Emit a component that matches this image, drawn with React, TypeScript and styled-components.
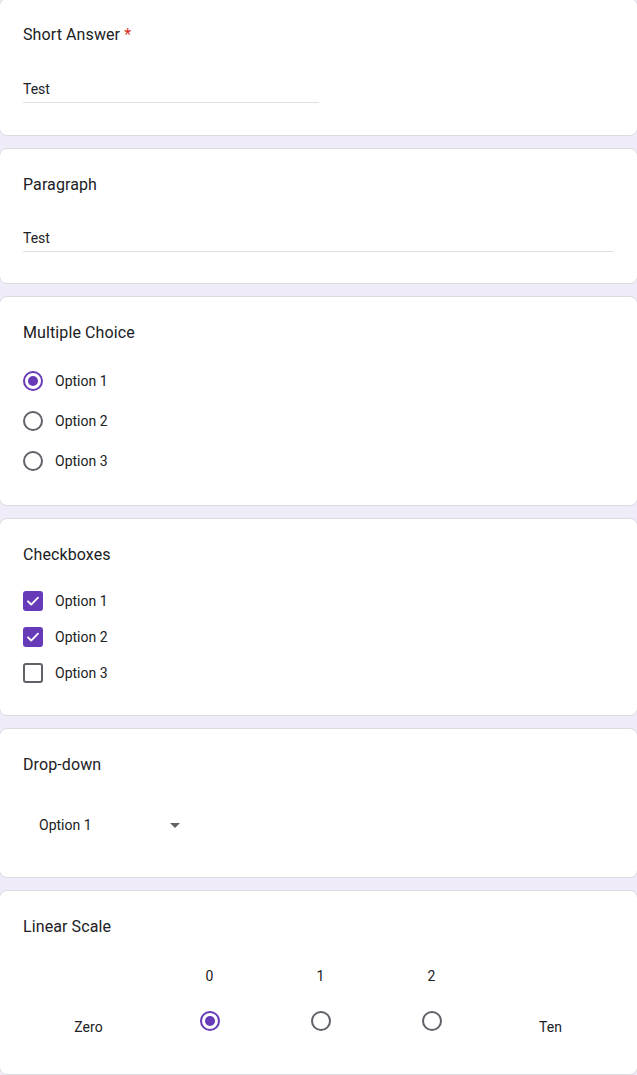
import React from 'react'
import styled, { createGlobalStyle } from 'styled-components'

const GlobalStyle = createGlobalStyle`
  html, body {
    margin: 0;
    padding: 0;
    background: #f0ebf8;
    overflow-x: hidden;
  }
  body {
    font-family: Roboto, 'Noto Sans', Arial, sans-serif;
    color: #202124;
  }
`

const Page = styled.div`
  display: flex;
  flex-direction: column;
  gap: 12px;
  margin-top: -2px;
`

const Card = styled.section<{ $padBottom?: number }>`
  background: #fff;
  border: 1px solid #dadce0;
  border-radius: 8px;
  margin: 0 -1px;
  padding: 24px 23px ${({ $padBottom }) => $padBottom ?? 24}px;
`

const Title = styled.div`
  font-size: 16px;
  line-height: 24px;
  letter-spacing: 0.1px;
  color: #202124;
`

const Required = styled.span`
  color: #d93025;
  margin-left: 4px;
`

const TextField = styled.div<{ $half?: boolean; $top: number }>`
  margin-top: ${({ $top }) => $top}px;
  width: ${({ $half }) => ($half ? '50%' : '100%')};
  font-size: 14px;
  line-height: 20px;
  padding-bottom: 3px;
  border-bottom: 1px solid #e0e0e0;
  color: #202124;
`

const OptionList = styled.div<{ $top: number }>`
  margin-top: ${({ $top }) => $top}px;
  display: flex;
  flex-direction: column;
`

const OptionRow = styled.div<{ $height: number }>`
  display: flex;
  align-items: center;
  height: ${({ $height }) => $height}px;
  font-size: 14px;
  gap: 12px;
`

const Radio = styled.span<{ $checked?: boolean }>`
  box-sizing: border-box;
  width: 20px;
  height: 20px;
  border-radius: 50%;
  border: 2px solid ${({ $checked }) => ($checked ? '#673ab7' : '#5f6368')};
  display: inline-flex;
  align-items: center;
  justify-content: center;
  flex-shrink: 0;

  &::after {
    content: '';
    width: 10px;
    height: 10px;
    border-radius: 50%;
    background: #673ab7;
    display: ${({ $checked }) => ($checked ? 'block' : 'none')};
  }
`

const Checkbox = styled.span<{ $checked?: boolean }>`
  box-sizing: border-box;
  width: 20px;
  height: 20px;
  border-radius: 3px;
  border: 2px solid ${({ $checked }) => ($checked ? '#673ab7' : '#5f6368')};
  background: ${({ $checked }) => ($checked ? '#673ab7' : '#fff')};
  display: inline-flex;
  align-items: center;
  justify-content: center;
  flex-shrink: 0;
`

const Select = styled.div`
  margin-top: 20px;
  width: 170px;
  height: 56px;
  box-sizing: border-box;
  padding: 0 13px 0 16px;
  display: flex;
  align-items: center;
  justify-content: space-between;
  font-size: 14px;
`

const Caret = styled.span`
  width: 0;
  height: 0;
  border-left: 5px solid transparent;
  border-right: 5px solid transparent;
  border-top: 5px solid #5f6368;
`

const Scale = styled.div`
  margin-top: 27px;
  margin-bottom: 13px;
  display: grid;
  grid-template-columns: 131px 111px 111px 111px 1fr;
  align-items: end;
`

const ScaleLabel = styled.div`
  text-align: center;
  font-size: 14px;
  line-height: 20px;
`

const ScaleOption = styled.div`
  display: flex;
  flex-direction: column;
  align-items: center;
  gap: 25px;
  padding-bottom: 6px;
  font-size: 14px;
  line-height: 20px;
`

const Check = () => (
  <svg width="16" height="16" viewBox="0 0 24 24" fill="none">
    <path d="M4.5 12.5l4.8 4.8L19.5 7" stroke="#fff" strokeWidth="2.8" strokeLinecap="round" strokeLinejoin="round" />
  </svg>
)

const App: React.FC = () => {
  const choices = ['Option 1', 'Option 2', 'Option 3']
  const checked = [true, true, false]

  return (
    <>
      <GlobalStyle />
      <Page>
        <Card $padBottom={32}>
          <Title>
            Short Answer<Required>*</Required>
          </Title>
          <TextField $half $top={32}>
            Test
          </TextField>
        </Card>

        <Card $padBottom={31}>
          <Title>Paragraph</Title>
          <TextField $top={31}>Test</TextField>
        </Card>

        <Card>
          <Title>Multiple Choice</Title>
          <OptionList $top={16}>
            {choices.map((c, i) => (
              <OptionRow key={c} $height={40}>
                <Radio $checked={i === 0} />
                {c}
              </OptionRow>
            ))}
          </OptionList>
        </Card>

        <Card>
          <Title>Checkboxes</Title>
          <OptionList $top={16}>
            {choices.map((c, i) => (
              <OptionRow key={c} $height={36}>
                <Checkbox $checked={checked[i]}>{checked[i] && <Check />}</Checkbox>
                {c}
              </OptionRow>
            ))}
          </OptionList>
        </Card>

        <Card>
          <Title>Drop-down</Title>
          <Select>
            Option 1
            <Caret />
          </Select>
        </Card>

        <Card>
          <Title>Linear Scale</Title>
          <Scale>
            <ScaleLabel>Zero</ScaleLabel>
            {[0, 1, 2].map((n) => (
              <ScaleOption key={n}>
                {n}
                <Radio $checked={n === 0} />
              </ScaleOption>
            ))}
            <ScaleLabel>Ten</ScaleLabel>
          </Scale>
        </Card>
      </Page>
    </>
  )
}

export default App
